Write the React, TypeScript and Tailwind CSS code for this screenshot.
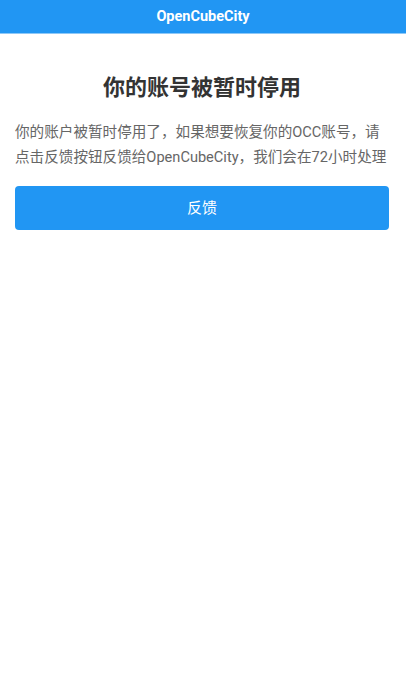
export default function App() {
  return (
    <div
      className="min-h-[700px] w-full bg-white"
      style={{ fontFamily: "Roboto, 'Noto Sans CJK SC', sans-serif" }}
    >
      <div className="flex h-[34px] items-center justify-center border-b border-[#8ec8f7] bg-[#2196f3]">
        <span className="text-[14.5px] font-bold text-white">OpenCubeCity</span>
      </div>
      <div className="pl-[15px] pr-[17px]">
        <h1 className="mt-[39px] text-center text-[22px] font-bold leading-[30px] text-[#333333]">
          你的账号被暂时停用
        </h1>
        <p className="mt-[17px] text-[14.6px] leading-[25px] text-[#666666]">
          你的账户被暂时停用了，如果想要恢复你的OCC账号，请点击反馈按钮反馈给OpenCubeCity，我们会在72小时处理
        </p>
        <button className="mt-[16px] flex h-[44px] w-full items-center justify-center rounded-[4px] bg-[#2196f3] text-[15px] text-white">
          反馈
        </button>
      </div>
    </div>
  );
}
